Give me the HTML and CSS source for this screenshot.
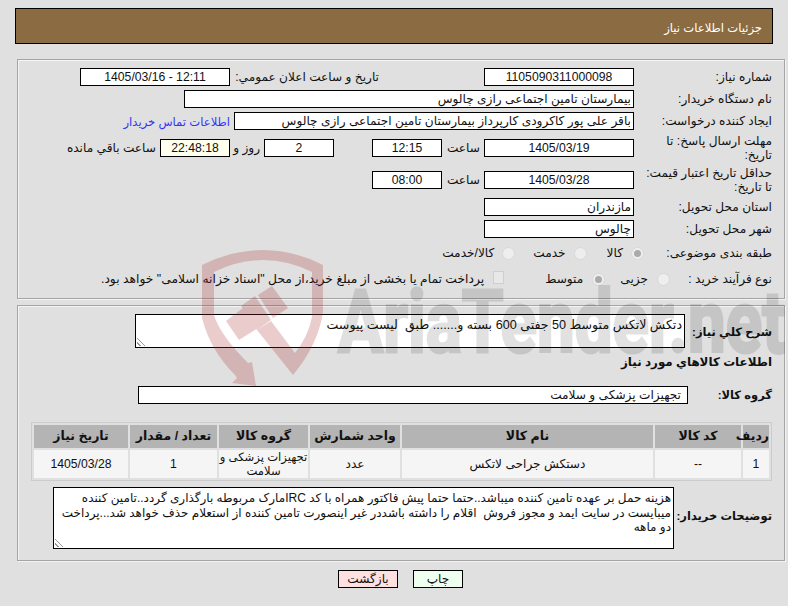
FILE: index.html
```html
<!DOCTYPE html>
<html lang="fa" dir="rtl">
<head>
<meta charset="utf-8">
<title>جزئيات اطلاعات نياز</title>
<link rel="stylesheet" href="styles.css">
</head>
<body>
<div class="page">
  <h1 class="title"><span>جزئيات اطلاعات نياز</span></h1>

  <section class="panel top">
    <div class="row r1">
      <label class="lbl">شماره نياز:</label>
      <div class="box w150 c num">1105090311000098</div>
      <label class="lbl pub">تاريخ و ساعت اعلان عمومي:</label>
      <div class="box w150 c num" dir="ltr">1405/03/16 - 12:11</div>
    </div>
    <div class="row r1">
      <label class="lbl">نام دستگاه خريدار:</label>
      <div class="box w450">بيمارستان تامين اجتماعی رازی چالوس</div>
    </div>
    <div class="row r1">
      <label class="lbl">ايجاد کننده درخواست:</label>
      <div class="box w400">باقر علی پور کاکرودی کارپرداز بيمارستان تامين اجتماعی رازی چالوس</div>
      <a class="link" href="#">اطلاعات تماس خريدار</a>
    </div>
    <div class="row r4">
      <label class="lbl wrap">مهلت ارسال پاسخ: تا<br>تاريخ:</label>
      <div class="box w150 c num">1405/03/19</div>
      <span class="unit u-hour">ساعت</span>
      <div class="box w70 c num">12:15</div>
      <div class="box w70 c num gap38">2</div>
      <span class="unit u-day">روز و</span>
      <div class="box w70 c num cream">22:48:18</div>
      <span class="unit u-left">ساعت باقي مانده</span>
    </div>
    <div class="row r5">
      <label class="lbl wrap">حداقل تاريخ اعتبار قيمت:<br>تا تاريخ:</label>
      <div class="box w150 c num">1405/03/28</div>
      <span class="unit u-hour">ساعت</span>
      <div class="box w70 c num">08:00</div>
    </div>
    <div class="row r6">
      <label class="lbl">استان محل تحويل:</label>
      <div class="box w150">مازندران</div>
    </div>
    <div class="row r1">
      <label class="lbl">شهر محل تحويل:</label>
      <div class="box w150">چالوس</div>
    </div>
    <div class="row r8">
      <label class="lbl lbl-radio">طبقه بندی موضوعی:</label>
      <span class="opt"><i class="radio on"></i>کالا</span>
      <span class="opt o2"><i class="radio"></i>خدمت</span>
      <span class="opt o3"><i class="radio"></i>کالا/خدمت</span>
    </div>
    <div class="row r9">
      <label class="lbl lbl-proc">نوع فرآيند خريد :</label>
      <span class="opt"><i class="radio"></i>جزيی</span>
      <span class="opt o4"><i class="radio on"></i>متوسط</span>
      <span class="opt o5"><i class="check"></i>پرداخت تمام يا بخشی از مبلغ خريد،از محل "اسناد خزانه اسلامی" خواهد بود.</span>
    </div>
  </section>

  <section class="panel bottom">
    <div class="row desc">
      <label class="lbl strong lbl-desc">شرح كلي نياز:</label>
      <div class="area a1">دتکش لاتکس متوسط 50 جفتی 600 بسته و....... طبق&nbsp; ليست پيوست<i class="grip"></i></div>
    </div>
    <h2 class="subhead">اطلاعات كالاهاي مورد نياز</h2>
    <div class="row group">
      <label class="lbl strong lbl-group">گروه كالا:</label>
      <div class="box w550 pad6">تجهيزات پزشکی و سلامت</div>
    </div>
    <table class="items">
      <thead>
        <tr>
          <th class="c1">رديف</th>
          <th class="c2">كد كالا</th>
          <th class="c3">نام كالا</th>
          <th class="c4">واحد شمارش</th>
          <th class="c5">گروه كالا</th>
          <th class="c6">تعداد / مقدار</th>
          <th class="c7">تاريخ نياز</th>
        </tr>
      </thead>
      <tbody>
        <tr>
          <td class="num">1</td>
          <td>--</td>
          <td>دستکش جراحی لاتکس</td>
          <td>عدد</td>
          <td class="tight">تجهيزات پزشکی و سلامت</td>
          <td class="num">1</td>
          <td class="num">1405/03/28</td>
        </tr>
      </tbody>
    </table>
    <div class="row notes">
      <label class="lbl strong lbl-notes">توضيحات خريدار:</label>
      <div class="area a2">هزينه حمل بر عهده تامين کننده ميباشد..حتما حتما پيش فاکتور همراه با کد IRCمارک مربوطه بارگذاری گردد..تامين کننده ميبايست در سايت ايمد و مجوز فروش&nbsp; اقلام را داشته باشددر غير اينصورت تامين کننده از استعلام حذف خواهد شد...پرداخت دو ماهه<i class="grip"></i></div>
    </div>
  </section>

  <div class="actions">
    <button class="btn print" type="button">چاپ</button>
    <button class="btn back" type="button">بازگشت</button>
  </div>
</div>
<svg class="watermark" viewBox="0 0 788 606" width="788" height="606" aria-hidden="true">
  <path class="wm-red" d="M235 375 Q210 350 202 318 L202 265 Q232 250 263 250 Q294 250 323 265 L323 312 Q318 345 293 375 L257 330 L271 321 L295 353 Q308 337 312 317 L312 272 Q288 260 263 260 Q238 260 214 272 L214 315 Q220 335 248 363 L252 362 L256 386 L232 383 L237 378 Z M226 321 L243 308 L258 328 L239 340 Z M241 306 L255 296 L271 320 L257 330 Z M258 295 L272 286 L288 308 L273 318 Z"/>
  <text class="wm-text" x="338" y="352" textLength="447" lengthAdjust="spacingAndGlyphs">AriaTender.net</text>
</svg>
</body>
</html>
```
FILE: styles.css
```css
* { box-sizing: border-box; }
html, body { margin: 0; padding: 0; }
body {
  width: 788px;
  height: 606px;
  overflow: hidden;
  background: #e0e0e0;
  color: #111;
  font: 12.15px/15px "Liberation Sans", "DejaVu Sans", sans-serif;
  position: relative;
}
.watermark { position: absolute; left: 0; top: 0; pointer-events: none; }
.wm-red { fill: rgba(170, 40, 40, .24); }
.wm-text {
  direction: ltr;
  unicode-bidi: bidi-override;
  font: bold 87px Roboto, "Liberation Sans", sans-serif;
  fill: #000;
  stroke: #000;
  stroke-width: 3px;
  opacity: .115;
}
.page { padding: 8px 3px 0 15px; }
.title {
  margin: 0 12px 0 0;
  height: 36px;
  background: #8b6c42;
  border: 1px solid #000;
  color: #fff;
  font-size: 11.6px;
  font-weight: normal;
  line-height: 38px;
  padding-right: 10px;
}
.panel {
  margin: 15px 0 0 2px;
  border: 1px solid #a4a4a4;
  box-shadow: inset 1px 1px 0 #f4f4f4, 1px 1px 0 #f4f4f4;
}
.top { height: 240px; padding: 8px 0 0; }
.bottom { height: 256px; margin-top: 6px; padding: 8px 0 0; }
.row { display: flex; align-items: center; }
.r1 { height: 18px; margin-bottom: 4px; }
.r4 { height: 18px; margin: 9px 0 14px; }
.r5 { height: 18px; margin-bottom: 9px; }
.r6 { height: 18px; margin-bottom: 4px; }
.r8 { height: 18px; margin-top: 6px; }
.r9 { height: 18px; margin-top: 8px; }
.lbl { flex: none; width: 150px; padding-right: 12px; white-space: nowrap; }
.wrap { line-height: 14.5px; }
.pub { width: 254px; padding-right: 105px; }
.box {
  flex: none;
  height: 18px;
  background: #fff;
  border: 1px solid #000;
  line-height: 17px;
  padding: 0 2px;
  white-space: nowrap;
  overflow: hidden;
}
.w150 { width: 150px; }
.w70 { width: 70px; }
.w400 { width: 400px; }
.w450 { width: 450px; }
.w550 { width: 550px; }
.pad6 { padding-right: 6px; }
.c { text-align: center; }
.num { font-size: 12.2px; }
.cream { background: #ffffee; }
.unit { flex: none; white-space: nowrap; padding-right: 4px; }
.u-hour { width: 42px; }
.u-day { width: 34px; }
.gap38 { margin-right: 38px; }
.link { color: #3333ff; font-size: 11.6px; text-decoration: none; margin-right: 4px; white-space: nowrap; }
.opt { display: inline-flex; align-items: center; white-space: nowrap; }
.radio {
  width: 13px;
  height: 13px;
  border-radius: 50%;
  background: #eee;
  border: 1px solid #d8d8d8;
  margin-left: 9px;
  position: relative;
}
.r8 .radio { margin-left: 8px; }
.radio.on::after {
  content: "";
  position: absolute;
  inset: 2px;
  border-radius: 50%;
  background: #aaa;
}
.check {
  width: 11px;
  height: 13px;
  background: #e8e8e8;
  border: 1px solid #cfcfcf;
  margin-left: 9px;
  margin-top: -4px;
}
.lbl-radio { width: 140px; }
.o2 { margin-right: 20px; }
.o3 { margin-right: 18px; }
.lbl-proc { width: 114px; }
.o4 { margin-right: 15px; }
.o5 { margin-right: 41px; font-size: 12.3px; }
.strong { font-weight: bold; font-size: 11.5px; }
.subhead { font-weight: bold; font-size: 11.9px; }
.area {
  position: relative;
  flex: none;
  background: #fff;
  border: 1px solid #000;
  padding: 3px 2px 2px;
  line-height: 14.5px;
}
.grip {
  position: absolute;
  left: 1px;
  bottom: 1px;
  width: 9px;
  height: 9px;
  background: repeating-linear-gradient(45deg, transparent 0 2px, #999 2px 3px);
  clip-path: polygon(0 0, 0 100%, 100% 100%);
}
.desc { height: 34px; align-items: flex-start; }
.a1 { width: 550px; height: 34px; font-size: 12.6px; }
.lbl-desc { width: 99px; padding-top: 11px; }
.subhead { margin: 6px 12px 0 0; line-height: 16px; }
.group { height: 18px; margin-top: 16px; }
.lbl-group { width: 96px; }
.items {
  width: 741px;
  margin: 18px 12px 0 0;
  border: 1px solid #ccc;
  border-spacing: 2px;
  padding: 0;
  table-layout: fixed;
  text-align: center;
}
.items th { height: 23px; background: #b4b4b4; padding: 0; font-size: 12.5px; }
.items td { height: 28px; background: #f5f5f5; padding: 0; line-height: 14px; }
.items td.tight { font-size: 11.6px; }
.c1 { width: 26px; }
.c2 { width: 86px; }
.c3 { width: 251px; }
.c4 { width: 90px; }
.c5 { width: 89px; }
.c6 { width: 87px; }
.c7 { width: 94px; }
.notes { align-items: flex-start; margin-top: 6px; height: 62px; }
.lbl-notes { width: 110px; padding-top: 22px; }
.a2 { width: 621px; height: 62px; font-size: 12px; }
.actions { display: flex; justify-content: center; gap: 15px; margin-top: 9px; padding-left: 1px; }
.btn {
  height: 18px;
  border: 1px solid #000;
  padding: 0;
  font: inherit;
  color: #111;
}
.print { width: 50px; background: #efffef; }
.back { width: 60px; background: #ffe0e0; }
```
